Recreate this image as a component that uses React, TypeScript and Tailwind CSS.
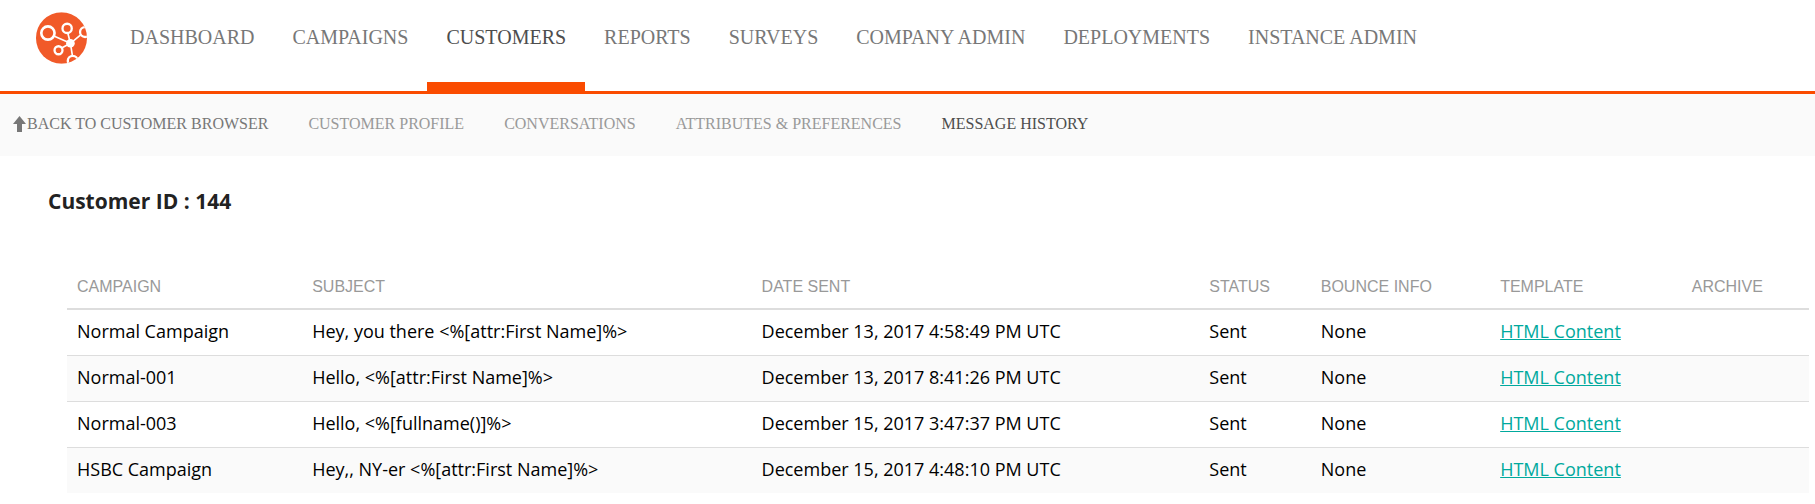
const navItems = [
  "Dashboard",
  "Campaigns",
  "Customers",
  "Reports",
  "Surveys",
  "Company Admin",
  "Deployments",
  "Instance Admin",
];

const subNavItems = [
  "Customer Profile",
  "Conversations",
  "Attributes & Preferences",
  "Message History",
];

const columns = [
  { label: "Campaign", width: "w-[13.5%]" },
  { label: "Subject", width: "w-[25.8%]" },
  { label: "Date Sent", width: "w-[25.7%]" },
  { label: "Status", width: "w-[6.4%]" },
  { label: "Bounce Info", width: "w-[10.3%]" },
  { label: "Template", width: "w-[11%]" },
  { label: "Archive", width: "" },
];

const messages = [
  {
    campaign: "Normal Campaign",
    subject: "Hey, you there <%[attr:First Name]%>",
    date: "December 13, 2017 4:58:49 PM UTC",
  },
  {
    campaign: "Normal-001",
    subject: "Hello, <%[attr:First Name]%>",
    date: "December 13, 2017 8:41:26 PM UTC",
  },
  {
    campaign: "Normal-003",
    subject: "Hello, <%[fullname()]%>",
    date: "December 15, 2017 3:47:37 PM UTC",
  },
  {
    campaign: "HSBC Campaign",
    subject: "Hey,, NY-er <%[attr:First Name]%>",
    date: "December 15, 2017 4:48:10 PM UTC",
  },
];

function Logo() {
  return (
    <svg viewBox="0 0 154 156" className="w-[51px] h-[52px]" aria-hidden="true">
      <defs>
        <clipPath id="disc">
          <ellipse cx="77" cy="78" rx="77" ry="78" />
        </clipPath>
      </defs>
      <g clipPath="url(#disc)">
        <rect width="154" height="156" fill="#f15a29" />
        <g fill="none" stroke="#fff" strokeWidth="7">
          <path d="M54 72 L104 94 M96 63 L104 94 M76 109 L104 94 M134 69 L104 94 M104 94 L110 132" strokeWidth="5" />
          <circle cx="36" cy="63" r="20" strokeWidth="8" />
          <circle cx="94" cy="49" r="14" />
          <circle cx="68" cy="115" r="12" />
          <circle cx="148" cy="60" r="15" />
          <circle cx="111" cy="147" r="15" />
        </g>
        <circle cx="104" cy="94" r="13" fill="#fff" />
      </g>
    </svg>
  );
}

export default function App() {
  return (
    <div className="min-h-screen bg-white text-black">
      <header className="flex border-b-[3px] border-[#fa4b00] pl-9 font-['Liberation_Serif',serif]">
        <a href="#" aria-label="Home" className="mt-3 mr-6">
          <Logo />
        </a>
        <nav className="flex">
          {navItems.map((item) => (
            <a
              key={item}
              href="#"
              className={`relative px-[19px] pt-[23px] pb-10 text-xl leading-7 uppercase whitespace-nowrap ${
                item === "Customers" ? "text-[#4d4d4d]" : "text-[#777]"
              }`}
            >
              {item}
              {item === "Customers" && (
                <span className="absolute inset-x-0 bottom-0 h-[9px] bg-[#fa4b00]" />
              )}
            </a>
          ))}
        </nav>
      </header>

      <nav className="flex items-center bg-[#fafafa] pl-[13px] pt-[18px] pb-5 text-base font-['Liberation_Serif',serif] uppercase whitespace-nowrap">
        <a href="#" className="flex items-center pr-5 text-[#777]">
          <svg viewBox="0 0 14 16" className="w-[14px] h-4" fill="currentColor" aria-hidden="true">
            <path d="M6.5 0 L13 8 H9 V16 H4 V8 H0 Z" />
          </svg>
          Back to Customer Browser
        </a>
        {subNavItems.map((item) => (
          <a
            key={item}
            href="#"
            className={`px-5 ${
              item === "Message History" ? "text-[#4d4d4d]" : "text-[#999]"
            }`}
          >
            {item}
          </a>
        ))}
      </nav>

      <main className="pt-[33px] font-['Open_Sans',sans-serif]">
        <h1 className="pl-12 text-[21px] leading-6 font-bold text-[#222]">
          Customer ID : 144
        </h1>
        <div className="mt-[55px] ml-[67px] mr-[6px]">
          <table className="w-full table-fixed border-collapse text-left">
            <thead>
              <tr className="border-b-2 border-[#ddd]">
                {columns.map((col) => (
                  <th
                    key={col.label}
                    scope="col"
                    className={`px-[10px] pt-[7px] pb-[9px] text-base font-normal font-['Liberation_Sans',sans-serif] uppercase text-[#999] ${col.width}`}
                  >
                    {col.label}
                  </th>
                ))}
              </tr>
            </thead>
            <tbody className="text-lg leading-6 whitespace-nowrap">
              {messages.map((msg) => (
                <tr
                  key={msg.campaign}
                  className="h-[46px] border-t border-[#ddd] even:bg-[#fafafa]"
                >
                  <td className="px-[10px] pb-[2px]">{msg.campaign}</td>
                  <td className="px-[10px] pb-[2px]">{msg.subject}</td>
                  <td className="px-[10px] pb-[2px]">{msg.date}</td>
                  <td className="px-[10px] pb-[2px]">Sent</td>
                  <td className="px-[10px] pb-[2px]">None</td>
                  <td className="px-[10px] pb-[2px]">
                    <a href="#" className="text-[#00a99d] underline">
                      HTML Content
                    </a>
                  </td>
                  <td />
                </tr>
              ))}
            </tbody>
          </table>
        </div>
      </main>
    </div>
  );
}
